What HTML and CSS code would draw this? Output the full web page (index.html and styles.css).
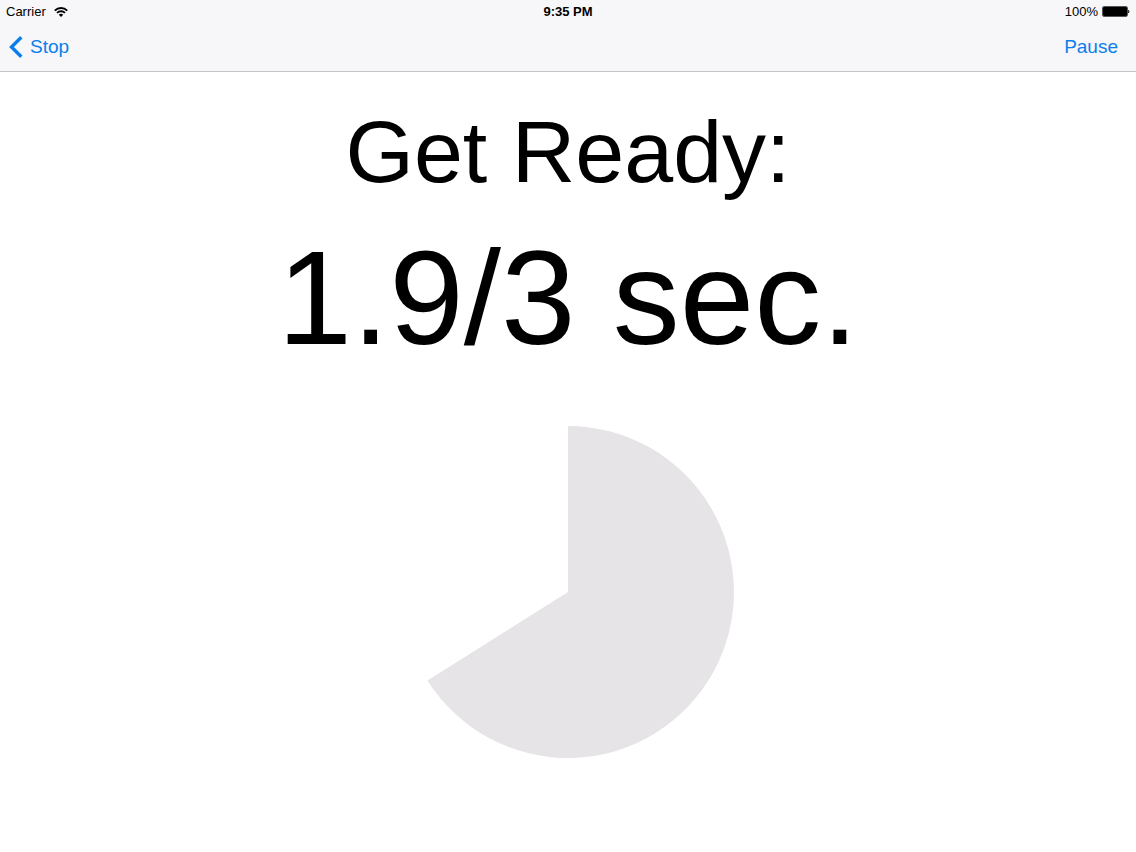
FILE: index.html
```
<!DOCTYPE html>
<html lang="en">

<head>
    <meta charset="UTF-8" />
    <meta name="viewport" content="width=device-width, initial-scale=1.0" />
    <title>Get Ready</title>
    <link rel="stylesheet" href="styles.css">
</head>

<body>
    <header class="top">
        <div class="status-bar">
            <div class="status-left">
                <span>Carrier</span>
                <svg class="wifi" viewBox="0 0 14 10" aria-hidden="true">
                    <path d="M0.8 3.6a8.8 8.8 0 0 1 12.4 0M3 5.9a5.7 5.7 0 0 1 8 0" />
                    <path class="wifi-dot" d="M7 10L4.8 7.8a3.1 3.1 0 0 1 4.4 0z" />
                </svg>
            </div>
            <div class="status-time">9:35 PM</div>
            <div class="status-right">
                <span>100%</span>
                <svg class="battery" viewBox="0 0 28 11" aria-hidden="true">
                    <rect class="battery-case" x="0.5" y="0.5" width="25" height="10" rx="1.5" />
                    <rect x="1" y="1" width="24" height="9" rx="1" />
                    <path d="M26.2 3.7c1.6 0.4 1.6 3.2 0 3.6z" />
                </svg>
            </div>
        </div>
        <nav class="nav-bar">
            <button class="nav-button" type="button">
                <svg class="chevron" viewBox="0 0 14 22" aria-hidden="true">
                    <path d="M12.3 1.3L2.5 11l9.8 9.7" />
                </svg>
                Stop
            </button>
            <button class="nav-button" type="button">Pause</button>
        </nav>
    </header>
    <main class="timer">
        <h1 class="title">Get Ready:</h1>
        <p class="seconds">1.9/3 sec.</p>
        <svg class="pie" viewBox="0 0 332 332" role="img" aria-label="Time elapsed">
            <path d="M166 166V0A166 166 0 1 1 25.5 254.5z" />
        </svg>
    </main>
</body>

</html>
```
FILE: styles.css
```
* {
    padding: 0;
    margin: 0;
    box-sizing: border-box;
}

body {
    background-color: #fff;
    color: #000;
    font-family: "Liberation Sans", Arial, sans-serif;
}

.top {
    background-color: #f7f6f8;
    border-bottom: 1px solid #c4c3c5;
}

.status-bar {
    display: grid;
    grid-template-columns: 1fr auto 1fr;
    align-items: center;
    height: 23px;
    padding: 0 6px;
    font-size: 13px;
}

.status-left,
.status-right {
    display: flex;
    align-items: center;
    gap: 8px;
}

.status-right {
    justify-content: flex-end;
    gap: 4px;
}

.status-time {
    font-weight: bold;
}

.wifi {
    width: 14px;
    height: 10px;
    fill: none;
    stroke: #000;
    stroke-width: 1.9;
}

.wifi-dot {
    fill: #000;
    stroke: none;
}

.battery {
    width: 28px;
    height: 11px;
}

.battery-case {
    fill: none;
    stroke: #555;
    stroke-width: 1;
}

.nav-bar {
    display: flex;
    justify-content: space-between;
    align-items: center;
    height: 48px;
    padding: 0 18px 0 9px;
}

.nav-button {
    display: flex;
    align-items: center;
    gap: 7px;
    border: none;
    background: none;
    color: #0a7fec;
    font-family: inherit;
    font-size: 19px;
    cursor: pointer;
}

.chevron {
    width: 14px;
    height: 22px;
    fill: none;
    stroke: currentColor;
    stroke-width: 3.4;
}

.timer {
    display: flex;
    flex-direction: column;
    align-items: center;
    padding-top: 32px;
}

.title {
    font-size: 88px;
    font-weight: normal;
    line-height: 96px;
}

.seconds {
    margin-top: 8px;
    font-size: 134px;
    line-height: 180px;
}

.pie {
    width: 332px;
    margin-top: 38px;
    fill: #e6e4e7;
}
```
